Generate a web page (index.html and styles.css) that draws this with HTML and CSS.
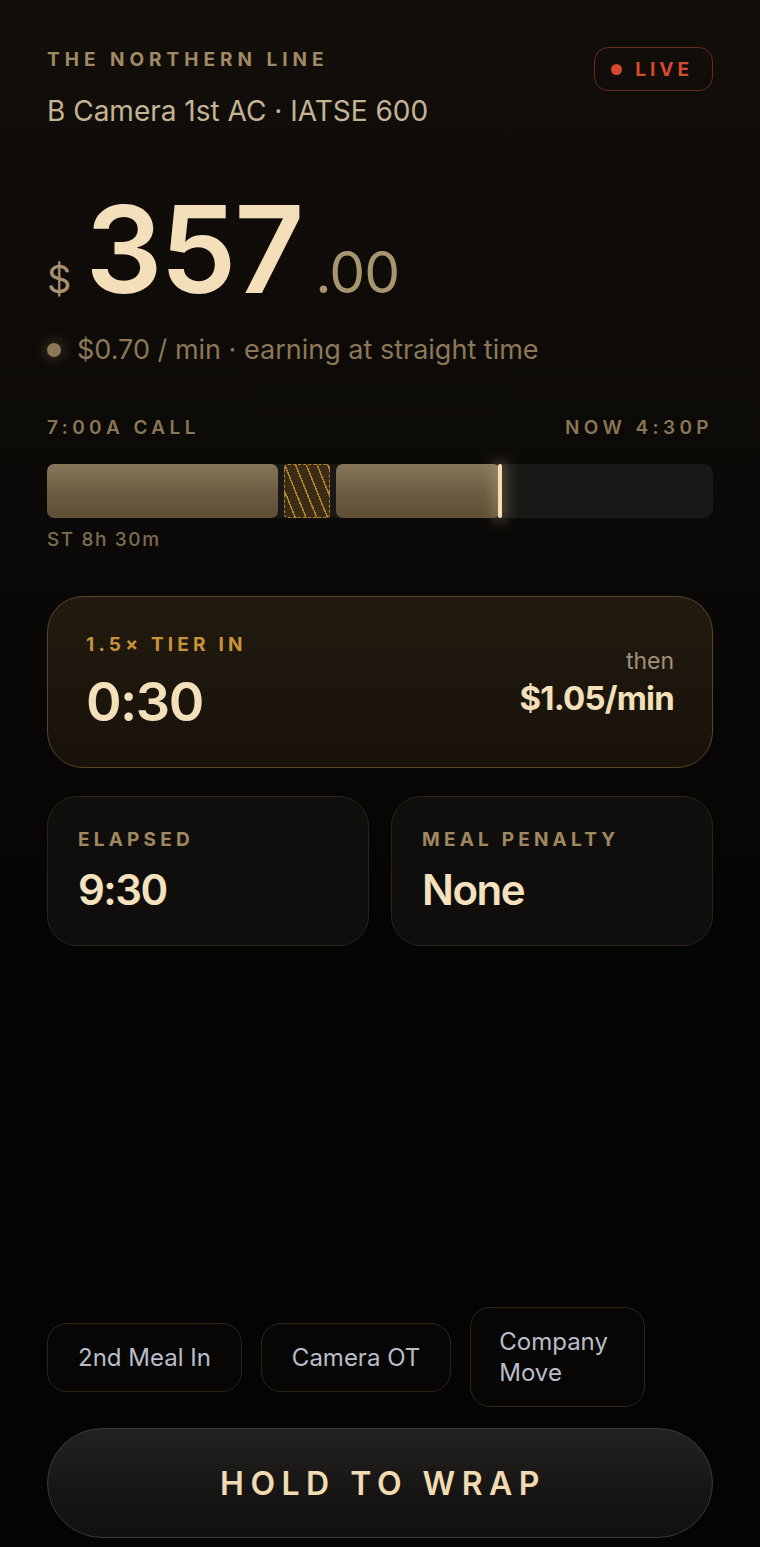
FILE: index.html
```html
<!DOCTYPE html>
<html>
<head>
    <meta charset="utf-8" />
    <title>Wrap Clock</title>
    <link rel="stylesheet" href="styles.css">
</head>
<body>
    <div class="screen">
      <!-- 顶部：剧组 + 职位 -->
      <div class="top_bar">
        <div class="crew">
          <div class="kicker">THE NORTHERN LINE</div>
          <div class="role">B Camera 1st AC · IATSE 600</div>
        </div>
        <div class="live_pill"><span class="live_dot"></span>LIVE</div>
      </div>

      <!-- 金额 -->
      <div class="amount">
        <span class="cur">$</span>
        <span class="whole">357</span>
        <span class="cents">.00</span>
      </div>
      <div class="rate"><span class="rate_dot"></span>$0.70 / min · earning at straight time</div>

      <!-- 时间轴 -->
      <div class="time_labels">
        <span>7:00A CALL</span>
        <span>NOW 4:30P</span>
      </div>
      <div class="track">
        <div class="seg seg_a"></div>
        <div class="seg seg_meal"></div>
        <div class="seg seg_b"></div>
      </div>
      <div class="st_label">ST 8h 30m</div>

      <!-- 下一档加班 -->
      <div class="tier_card">
        <div>
          <div class="tier_label">1.5× TIER IN</div>
          <div class="tier_value">0:30</div>
        </div>
        <div class="tier_then">
          <div class="then">then</div>
          <div class="then_rate">$1.05/min</div>
        </div>
      </div>

      <div class="stats">
        <div class="stat_card">
          <div class="stat_label">ELAPSED</div>
          <div class="stat_value">9:30</div>
        </div>
        <div class="stat_card">
          <div class="stat_label">MEAL PENALTY</div>
          <div class="stat_value">None</div>
        </div>
      </div>

      <div class="spacer"></div>

      <!-- 快捷按钮 -->
      <div class="chips">
        <button class="chip">2nd Meal In</button>
        <button class="chip">Camera OT</button>
        <button class="chip chip_narrow">Company Move</button>
      </div>
      <button class="wrap_btn">HOLD TO WRAP</button>
    </div>
</body>
</html>
```

FILE: styles.css
```css
* {
  margin: 0;
  padding: 0;
  box-sizing: border-box;
}
body {
  background: linear-gradient(180deg, #120e0a 0%, #0b0907 35%, #050404 60%, #040404 100%);
  font-family: Inter, "Liberation Sans", sans-serif;
  color: #f3e0bb;
}
.screen {
  display: flex;
  flex-direction: column;
  min-height: 1547px;
  padding: 47px 47px 9px;
}
/* 顶部 */
.top_bar {
  display: flex;
  justify-content: space-between;
  align-items: flex-start;
}
.kicker {
  font-size: 19px;
  line-height: 22px;
  font-weight: 700;
  letter-spacing: 5px;
  color: #a08a64;
  margin-top: 2px;
}
.role {
  margin-top: 23px;
  font-size: 28px;
  line-height: 34px;
  color: #c4b394;
}
.live_pill {
  display: flex;
  align-items: center;
  gap: 13px;
  height: 44px;
  padding: 0 19px 0 16px;
  border: 1.5px solid #6a2a1d;
  border-radius: 14px;
  font-size: 19px;
  font-weight: 700;
  letter-spacing: 4px;
  color: #d8492e;
}
.live_dot {
  width: 11px;
  height: 11px;
  border-radius: 50%;
  background-color: #d8492e;
}
/* 金额 */
.amount {
  display: flex;
  align-items: baseline;
  margin-top: 61px;
  line-height: 1;
}
.amount .cur {
  font-size: 38px;
  color: #a89070;
  margin-right: 14px;
}
.amount .whole {
  font-size: 121px;
  font-weight: 600;
  letter-spacing: -2px;
  color: #f3e0bb;
}
.amount .cents {
  font-size: 57px;
  color: #a8946f;
  margin-left: 13px;
  letter-spacing: -1px;
}
.rate {
  display: flex;
  align-items: center;
  margin-top: 24px;
  font-size: 27px;
  line-height: 32px;
  color: #8c7858;
}
.rate_dot {
  width: 14px;
  height: 14px;
  border-radius: 50%;
  background-color: #8c7656;
  box-shadow: 0 0 12px 4px rgba(140, 118, 86, 0.25);
  margin: 0 16px 0 0;
}
/* 时间轴 */
.time_labels {
  display: flex;
  justify-content: space-between;
  margin-top: 51px;
  font-size: 19px;
  line-height: 22px;
  font-weight: 600;
  letter-spacing: 4.4px;
  color: #8a7656;
}
.track {
  display: flex;
  gap: 6px;
  height: 54px;
  margin-top: 25px;
  border-radius: 9px;
  background-color: #1a1816;
}
.seg {
  border-radius: 7px;
}
.seg_a {
  width: 231px;
  background: linear-gradient(180deg, #877659 0%, #6c5b40 55%, #5e4e34 100%);
}
.seg_meal {
  width: 46px;
  border: 1.5px dashed #b3832d;
  border-radius: 4px;
  background: repeating-linear-gradient(68deg, #3a2c15 0 8.5px, #b3832d 8.5px 10px);
}
.seg_b {
  position: relative;
  width: 164px;
  background: linear-gradient(180deg, #877659 0%, #6c5b40 55%, #5e4e34 100%);
}
/* 当前时间指针 */
.seg_b::after {
  content: "";
  position: absolute;
  top: 0;
  right: -2px;
  width: 4px;
  height: 54px;
  border-radius: 2px;
  background-color: #f5deb0;
  box-shadow: 0 0 14px 4px rgba(245, 222, 176, 0.3);
}
.st_label {
  margin-top: 11px;
  font-size: 19px;
  line-height: 22px;
  font-weight: 500;
  letter-spacing: 1.6px;
  color: #7e6c50;
}
/* 卡片 */
.tier_card {
  display: flex;
  justify-content: space-between;
  align-items: center;
  margin-top: 45px;
  padding: 37px 38px 38px;
  border: 1.5px solid #5b4523;
  border-radius: 36px;
  background: linear-gradient(180deg, #221a0e 0%, #18120b 100%);
}
.tier_label {
  font-size: 19px;
  line-height: 22px;
  font-weight: 700;
  letter-spacing: 4.2px;
  color: #c8943a;
}
.tier_value {
  margin-top: 19px;
  font-size: 54px;
  line-height: 1;
  font-weight: 600;
  letter-spacing: -1.5px;
  color: #f3e0bb;
}
.tier_then {
  text-align: right;
}
.then {
  font-size: 23px;
  line-height: 26px;
  color: #a0917a;
}
.then_rate {
  margin-top: 6px;
  font-size: 33px;
  line-height: 36px;
  font-weight: 700;
  letter-spacing: -0.8px;
  color: #f3e0bb;
}
.stats {
  display: flex;
  gap: 22px;
  margin-top: 28px;
}
.stat_card {
  flex: 1;
  padding: 32px 30px 34px;
  border: 1.5px solid #2c2419;
  border-radius: 30px;
  background-color: #100e0c;
}
.stat_label {
  font-size: 19px;
  line-height: 22px;
  font-weight: 700;
  letter-spacing: 4.2px;
  color: #a08860;
}
.stat_value {
  margin-top: 18px;
  font-size: 42px;
  line-height: 1;
  font-weight: 600;
  letter-spacing: -1.5px;
  color: #f4e2be;
}
.spacer {
  flex: 1;
}
/* 快捷按钮 */
.chips {
  display: flex;
  align-items: center;
  gap: 19px;
}
.chip {
  padding: 18px 30px;
  border: 1.5px solid #2e2518;
  border-radius: 20px;
  background-color: #070605;
  font-family: Inter, "Liberation Sans", sans-serif;
  font-size: 24px;
  line-height: 31px;
  text-align: left;
  color: #b9bdc9;
}
.chip_narrow {
  width: 175px;
  padding: 18px 28px;
}
.wrap_btn {
  height: 110px;
  margin-top: 21px;
  border: 1.5px solid #3b3936;
  border-radius: 55px;
  background: linear-gradient(180deg, #242220 0%, #161514 60%, #121110 100%);
  font-family: Inter, "Liberation Sans", sans-serif;
  font-size: 32px;
  font-weight: 600;
  letter-spacing: 6.5px;
  padding-left: 6px;
  color: #f0dbb2;
}
```
